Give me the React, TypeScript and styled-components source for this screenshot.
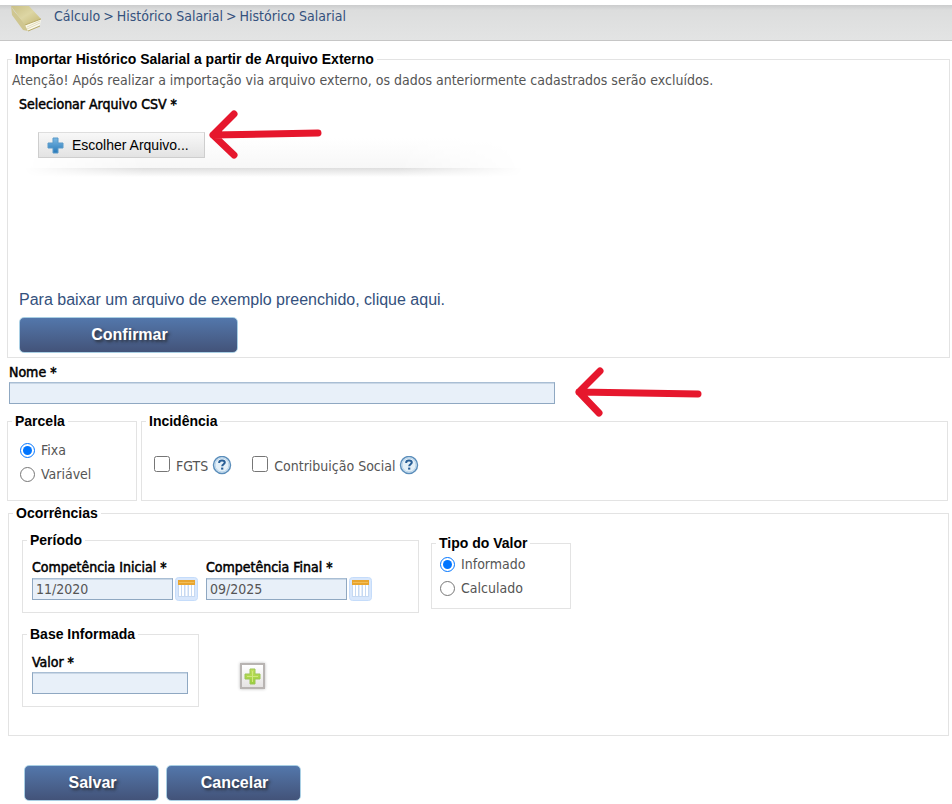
import React from "react";
import styled, { createGlobalStyle } from "styled-components";

const UI_FONT = `"DejaVu Sans Condensed", "Noto Sans", sans-serif`;
const ARIAL = `"Liberation Sans", Arial, sans-serif`;

const GlobalStyle = createGlobalStyle`
  * { box-sizing: border-box; }
  body { margin: 0; background: #fff; color: #555; font: 14px/16px ${UI_FONT}; }
`;

const Page = styled.div`
  padding-top: 5px;
  overflow-x: hidden;
`;

const Header = styled.header`
  display: flex;
  height: 36px;
  padding-left: 10px;
  gap: 12px;
  border-bottom: 1px solid #c6c6c6;
  background: linear-gradient(#cbcccd 0, #dcdddd 5px, #e3e4e4 100%);
`;

const Crumbs = styled.nav`
  display: flex;
  gap: 3px;
  padding-top: 3px;
  color: #34517d;
`;

const CrumbLink = styled.a`
  color: #34517d;
  text-decoration: none;
`;

const Form = styled.form`
  padding: 10px 2px 0 7px;
`;

const Group = styled.fieldset`
  min-width: 0;
  margin: 0;
  padding: 0;
  border: 1px solid #e3e3e3;
`;

const GroupBody = styled.div<{ $pad: string }>`
  padding: ${(p) => p.$pad};
`;

const Legend = styled.legend`
  margin-left: 4px;
  padding: 0 3px;
  color: #000;
  font: bold 14px/16px ${ARIAL};
`;

const Notice = styled.p`
  margin: 0 0 8px 4px;
`;

const Indent = styled.div`
  padding-left: 11px;
`;

const Label = styled.label`
  display: block;
  color: #000;
  -webkit-text-stroke: 0.5px #000;
`;

const UploadPanel = styled.div`
  position: relative;
  width: 504px;
  max-width: 100%;
  height: 66px;
  padding: 20px 19px;

  &::before, &::after {
    content: "";
    position: absolute;
    left: 0;
    right: 0;
    z-index: -1;
    mask-image: linear-gradient(90deg, transparent 1%, #000 25%, #000 75%, transparent);
  }
  &::before { top: 26px; height: 30px; background: linear-gradient(#fff, #f7f7f7); }
  &::after { top: 56px; height: 9px; background: linear-gradient(#dedede, #fff); }
`;

const ChooseButton = styled.button`
  display: flex;
  align-items: center;
  gap: 8px;
  height: 26px;
  padding: 0 15px 0 8px;
  border: 1px solid #cecece;
  border-top-color: #dedede;
  background: linear-gradient(#f8f8f8, #e3e3e3);
  color: #000;
  font: 14px/18px ${ARIAL};
`;

const Arrow = styled.svg<{ $left: number; $top: number }>`
  position: absolute;
  left: ${(p) => p.$left}px;
  top: ${(p) => p.$top}px;
  pointer-events: none;
  fill: none;
  stroke: #e6172d;
  stroke-width: 7;
  stroke-linecap: round;
  stroke-linejoin: round;
`;

const SampleLink = styled.a`
  display: block;
  margin: 113px 0 8px;
  color: #34517d;
  font: 16px/18px ${ARIAL};
  text-decoration: none;
`;

const PrimaryButton = styled.button<{ $width: number }>`
  width: ${(p) => p.$width}px;
  height: 36px;
  padding: 0 0 1px 2px;
  border: 1px solid #a9cfe4;
  border-radius: 5px;
  background: linear-gradient(#5377ab, #435379);
  color: #fff;
  font: bold 16px/18px ${ARIAL};
  text-shadow: 2px 2px 3px #222c;
`;

const NameField = styled.div`
  position: relative;
  padding: 6px 2px 0;
`;

const TextInput = styled.input<{ $width: number }>`
  display: block;
  width: ${(p) => p.$width}px;
  max-width: 100%;
  height: 22px;
  margin: 0;
  padding: 0 3px;
  border: 1px solid #8fa8c2;
  border-top-color: #a9bed4;
  border-radius: 0;
  outline: 0;
  background: #e8f0f9;
  box-shadow: inset 0 1px #c9d7e6;
  color: #555;
  font: inherit;
`;

const SpacedInput = styled(TextInput)`
  margin-top: 2px;
`;

const Row = styled.div<{ $gap: number }>`
  display: flex;
  align-items: flex-start;
  gap: ${(p) => p.$gap}px;
`;

const KindRow = styled.div`
  display: grid;
  grid-template-columns: 130px 1fr;
  gap: 4px;
  margin: 9px 2px 4px 0;
`;

const Option = styled.label`
  display: flex;
  align-items: center;
  gap: 6px;
  height: 24px;
`;

const Radio = styled.input.attrs({ type: "radio" })`
  width: 15px;
  height: 15px;
  margin: 0;
  accent-color: #0075ff;
`;

const Checkbox = styled.input.attrs({ type: "checkbox" })`
  width: 16px;
  height: 16px;
  margin: 0 0 4px;
`;

const CheckItem = styled.div`
  display: flex;
  align-items: center;
  gap: 4px;
`;

const Occurrences = styled(Group)`
  margin: 0 1px;
`;

const TypeGroup = styled(Group)`
  width: 140px;
  margin-top: 3px;
`;

const BaseRow = styled.div`
  display: flex;
  align-items: flex-start;
  gap: 41px;
  margin-top: 13px;
`;

const IconButton = styled.button`
  display: flex;
  padding: 0;
  border: 0;
  background: none;
`;

const AddButton = styled(IconButton)`
  align-items: center;
  justify-content: center;
  width: 25px;
  height: 26px;
  margin-top: 37px;
  border: 2px solid #b8b4b2;
  background: linear-gradient(#fff, #e5e3e3);
  box-shadow: 0 0 3px #bbb;
`;

const DateRow = styled.div`
  display: flex;
  align-items: center;
  gap: 2px;
  margin-top: 2px;
`;

const Actions = styled.div`
  display: flex;
  gap: 7px;
  padding: 29px 17px 3px;
`;

function BookIcon() {
  return (
    <svg width="32" height="28" viewBox="0 0 32 28" aria-hidden="true">
      <defs>
        <linearGradient id="book-cover" x1="0" y1="0" x2="1" y2="1">
          <stop stopColor="#c9bf84" />
          <stop offset=".5" stopColor="#ddd6a4" />
          <stop offset="1" stopColor="#c3b672" />
        </linearGradient>
      </defs>
      <path d="M1 1 4 6 16 20 18 26 13 25 2 10Z" fill="#cfc690" />
      <path d="M1 1H19L31 14 15 20Z" fill="url(#book-cover)" />
      <path d="M15 20 31 14 30 20 18 26Z" fill="#fbf9ea" />
      <path d="M17 22 30 16M17 24 30 18" stroke="#e2dcbf" />
      <path d="M15 20 31 14M18 26 30 21" stroke="#b9ab67" />
    </svg>
  );
}

function PlusIcon({ green = false }: { green?: boolean }) {
  const id = green ? "plus-green" : "plus-blue";
  return (
    <svg width="17" height="17" viewBox="0 0 17 17" aria-hidden="true">
      <defs>
        <linearGradient id={id} x2="0" y2="1">
          <stop stopColor={green ? "#c3e05c" : "#7bb9e4"} />
          <stop offset="1" stopColor={green ? "#98cf3b" : "#2878b8"} />
        </linearGradient>
      </defs>
      <path
        d="M6 1h5v5h5v5h-5v5H6v-5H1V6h5Z"
        fill={`url(#${id})`}
        stroke={green ? "#9cc558" : "#5b9ac9"}
        strokeLinejoin="round"
      />
      {green && <path d="M8.5 3v11M3 8.5h11" stroke="#d0e880" />}
    </svg>
  );
}

function HelpIcon() {
  return (
    <svg width="20" height="20" viewBox="0 0 20 20" role="img" aria-label="Ajuda">
      <circle cx="10" cy="9" r="8.5" fill="#e4f0f8" stroke="#5b8ebb" strokeWidth="1.5" />
      <circle cx="10" cy="9" r="7" fill="none" stroke="#b5d1e8" />
      <path d="M7.2 7V6.5C7.2 5.2 8.2 4.6 10 4.6s2.8.8 2.8 2c0 1.6-2.6 1.7-2.6 3.6" fill="none" stroke="#285e96" strokeWidth="2" />
      <path d="M9.1 11.6h2.2v2H9.1Z" fill="#285e96" />
    </svg>
  );
}

function CalendarIcon() {
  return (
    <svg width="23" height="24" viewBox="0 0 23 24" aria-hidden="true">
      <rect x=".5" y=".5" width="22" height="23" rx="3" fill="#d8e7fc" stroke="#c5dcfa" />
      <path d="M3 4h17v16H3Z" fill="#c6d9f2" />
      <path d="M5 8v11M8 8v11M11.5 8v11M15 8v11M18 8v11" stroke="#fff" strokeWidth="2" />
      <path d="M3 3h17v5H3Z" fill="#e9a52e" />
      <path d="M4 5.5h15" stroke="#f2bd57" />
    </svg>
  );
}

function DateField({ id, label, value }: { id: string; label: string; value: string }) {
  return (
    <div>
      <Label htmlFor={id}>{label}</Label>
      <DateRow>
        <TextInput id={id} $width={141} defaultValue={value} />
        <IconButton type="button" aria-label={`Abrir calendário: ${label}`}>
          <CalendarIcon />
        </IconButton>
      </DateRow>
    </div>
  );
}

export default function App() {
  return (
    <Page>
      <GlobalStyle />
      <Header>
        <BookIcon />
        <Crumbs aria-label="Navegação">
          <CrumbLink href="#calculo">Cálculo</CrumbLink>
          <span>&gt;</span>
          <CrumbLink href="#historico">Histórico Salarial</CrumbLink>
          <span>&gt;</span>
          <span>Histórico Salarial</span>
        </Crumbs>
      </Header>

      <Form onSubmit={(e) => e.preventDefault()}>
        <Group>
          <Legend>Importar Histórico Salarial a partir de Arquivo Externo</Legend>
          <GroupBody $pad="5px 0 4px">
            <Notice>
              Atenção! Após realizar a importação via arquivo externo, os dados anteriormente cadastrados serão excluídos.
            </Notice>
            <Indent>
              <Label htmlFor="csv">Selecionar Arquivo CSV *</Label>
              <UploadPanel>
                <ChooseButton id="csv" type="button">
                  <PlusIcon />
                  Escolher Arquivo...
                </ChooseButton>
                <Arrow $left={189} $top={-3} width="118" height="54" aria-hidden="true">
                  <path d="M110 24 5 26M26 5 5 26 26 46" />
                </Arrow>
              </UploadPanel>
              <SampleLink href="#exemplo">Para baixar um arquivo de exemplo preenchido, clique aqui.</SampleLink>
              <PrimaryButton type="button" $width={219}>Confirmar</PrimaryButton>
            </Indent>
          </GroupBody>
        </Group>

        <NameField>
          <Label htmlFor="nome">Nome *</Label>
          <SpacedInput id="nome" $width={546} />
          <Arrow $left={567} $top={8} width="132" height="54" aria-hidden="true">
            <path d="M124 28 5 26M26 5 5 26 25 47" />
          </Arrow>
        </NameField>

        <KindRow>
          <Group>
            <Legend>Parcela</Legend>
            <GroupBody $pad="9px 12px 14px">
              <Option><Radio name="parcela" defaultChecked />Fixa</Option>
              <Option><Radio name="parcela" />Variável</Option>
            </GroupBody>
          </Group>
          <Group>
            <Legend>Incidência</Legend>
            <GroupBody $pad="25px 12px 22px">
              <Row $gap={20}>
                <CheckItem>
                  <Option><Checkbox />FGTS</Option>
                  <HelpIcon />
                </CheckItem>
                <CheckItem>
                  <Option><Checkbox />Contribuição Social</Option>
                  <HelpIcon />
                </CheckItem>
              </Row>
            </GroupBody>
          </Group>
        </KindRow>

        <Occurrences>
          <Legend>Ocorrências</Legend>
          <GroupBody $pad="11px 13px 28px">
            <Row $gap={12}>
              <Group>
                <Legend>Período</Legend>
                <GroupBody $pad="11px 46px 11px 9px">
                  <Row $gap={8}>
                    <DateField id="inicial" label="Competência Inicial *" value="11/2020" />
                    <DateField id="final" label="Competência Final *" value="09/2025" />
                  </Row>
                </GroupBody>
              </Group>
              <TypeGroup>
                <Legend>Tipo do Valor</Legend>
                <GroupBody $pad="1px 8px 8px">
                  <Option><Radio name="tipo" defaultChecked />Informado</Option>
                  <Option><Radio name="tipo" />Calculado</Option>
                </GroupBody>
              </TypeGroup>
            </Row>
            <BaseRow>
              <Group>
                <Legend>Base Informada</Legend>
                <GroupBody $pad="12px 10px 12px 9px">
                  <Label htmlFor="valor">Valor *</Label>
                  <SpacedInput id="valor" $width={156} />
                </GroupBody>
              </Group>
              <AddButton type="button" aria-label="Adicionar">
                <PlusIcon green />
              </AddButton>
            </BaseRow>
          </GroupBody>
        </Occurrences>

        <Actions>
          <PrimaryButton type="submit" $width={135}>Salvar</PrimaryButton>
          <PrimaryButton type="button" $width={135}>Cancelar</PrimaryButton>
        </Actions>
      </Form>
    </Page>
  );
}
